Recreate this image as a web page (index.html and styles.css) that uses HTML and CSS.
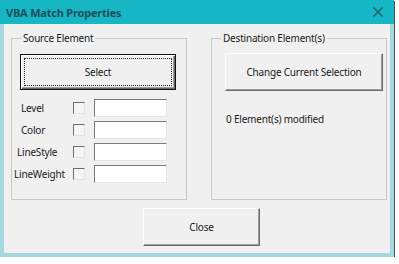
FILE: index.html
```html
<!DOCTYPE html>
<html lang="en">

<head>
    <meta charset="UTF-8">
    <meta name="viewport" content="width=device-width, initial-scale=1.0">
    <title>VBA Match Properties</title>
    <link rel="stylesheet" href="styles.css">
</head>

<body>
    <div class="window">
        <div class="titlebar">
            <span class="title">VBA Match Properties</span>
            <svg class="close-x" width="10" height="10" viewBox="0 0 10 10">
                <path d="M0.5 0.5 L9.5 9.5 M9.5 0.5 L0.5 9.5" stroke="#2b5a66" stroke-width="1.2" fill="none" />
            </svg>
        </div>

        <div class="client">
            <div class="groups">
                <fieldset class="group source">
                    <legend>Source Element</legend>
                    <button class="btn btn-default select">Select</button>

                    <div class="props">
                        <label class="lbl lbl-level">Level</label>
                        <span class="check"></span>
                        <span class="textbox"></span>

                        <label class="lbl lbl-color">Color</label>
                        <span class="check"></span>
                        <span class="textbox"></span>

                        <label class="lbl lbl-style">LineStyle</label>
                        <span class="check"></span>
                        <span class="textbox"></span>

                        <label class="lbl lbl-weight">LineWeight</label>
                        <span class="check"></span>
                        <span class="textbox"></span>
                    </div>
                </fieldset>

                <fieldset class="group dest">
                    <legend>Destination Element(s)</legend>
                    <button class="btn change">Change Current Selection</button>
                    <p class="status">0 Element(s) modified</p>
                </fieldset>
            </div>

            <button class="btn close">Close</button>
        </div>
    </div>
</body>

</html>
```

FILE: styles.css
```css
body {
    margin: 0;
    background-color: #fff;
    font-family: "Noto Sans", sans-serif;
    font-size: 10px;
    letter-spacing: -0.2px;
    color: #1a1a1a;
}

.window {
    width: 394px;
    height: 257px;
    display: flex;
    flex-direction: column;
    box-shadow: 1px 1px 0 #505050;
}

.titlebar {
    height: 24px;
    flex-shrink: 0;
    background-color: #17b6c4;
    display: flex;
    align-items: center;
    justify-content: space-between;
    padding: 0 11px 0 6px;
}

.title {
    font-size: 11px;
    font-weight: bold;
    color: #1d4e5b;
}

.client {
    flex: 1;
    background-color: #f0f0f0;
    border: 4px solid #a6d8df;
    border-top: 0;
    padding: 7px 0 0 7px;
}

.groups {
    display: flex;
    gap: 24px;
}

.group {
    box-sizing: border-box;
    width: 176px;
    height: 169px;
    margin: 0;
    padding: 9px 0 0 0;
    border: 1px solid #c8c8c8;
}

.group legend {
    margin-left: 9px;
    padding: 0 2px;
    line-height: 14px;
}

.btn {
    display: block;
    box-sizing: border-box;
    font-family: inherit;
    font-size: 10px;
    letter-spacing: -0.2px;
    color: #1a1a1a;
    background-color: #f0f0f0;
    border: 1px solid;
    border-color: #fdfdfd #6a6a6a #6a6a6a #fdfdfd;
    box-shadow: inset -1px -1px 0 #a0a0a0;
    padding: 0;
}

.btn-default {
    border-color: #111;
    box-shadow: inset 1px 1px 0 #fff, inset -1px -1px 0 #6a6a6a, inset -2px -2px 0 #a0a0a0;
    outline: 1px dotted #222;
    outline-offset: -5px;
}

.select {
    margin-left: 8px;
    width: 156px;
    height: 36px;
}

.props {
    margin-top: 9px;
    display: grid;
    grid-template-columns: 61px 21px 73px;
    grid-auto-rows: 18px;
    row-gap: 4px;
    align-items: center;
}

.lbl-level,
.lbl-color {
    padding-left: 9px;
}

.lbl-style {
    padding-left: 5px;
}

.lbl-weight {
    padding-left: 2px;
}

.check {
    width: 10px;
    height: 10px;
    border: 1px solid;
    border-color: #6d6d6d #e4e4e4 #e4e4e4 #6d6d6d;
    background-color: #f5f5f5;
}

.textbox {
    box-sizing: border-box;
    height: 18px;
    background-color: #fff;
    border: 1px solid;
    border-color: #7a7a7a #e6e6e6 #e6e6e6 #7a7a7a;
}

.change {
    margin: -1px 0 0 13px;
    width: 158px;
    height: 38px;
}

.status {
    margin: 21px 0 0 14px;
    line-height: 14px;
}

.close {
    margin: 8px 0 0 132px;
    width: 117px;
    height: 38px;
}
```
